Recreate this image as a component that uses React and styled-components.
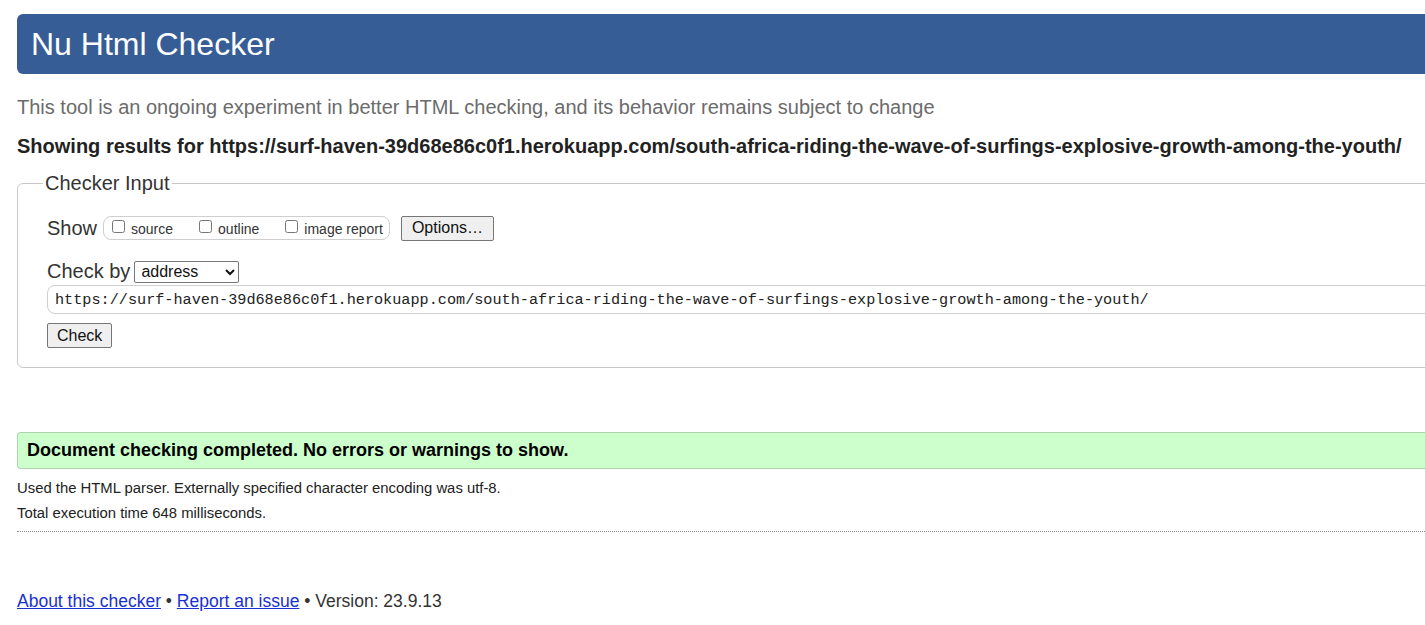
import React from "react";
import styled, { createGlobalStyle } from "styled-components";

const Global = createGlobalStyle`
  html, body { margin: 0; padding: 0; background: #fff; overflow: hidden; }
  body { font-family: "Liberation Sans", Arial, sans-serif; color: #222; }
`;

const Page = styled.div`
  width: 1600px;
  padding: 14px 0 0 17px;
`;

const Header = styled.h1`
  margin: 0;
  height: 60px;
  line-height: 60px;
  background: #365d95;
  color: #fff;
  font-size: 32px;
  font-weight: normal;
  padding-left: 14px;
  border-radius: 6px 0 0 6px;
`;

const Subtitle = styled.p`
  margin: 22px 0 0;
  font-size: 20px;
  line-height: 23px;
  color: #6b6b6b;
`;

const Results = styled.p`
  margin: 16px 0 0;
  font-size: 20px;
  line-height: 23px;
  font-weight: bold;
  color: #222;
`;

const Fieldset = styled.fieldset`
  margin: 14px 0 0;
  padding: 0 0 19px 29px;
  border: 1px solid #c9c9c9;
  border-radius: 6px;
  min-width: 0;
`;

const Legend = styled.legend`
  font-size: 20px;
  line-height: 23px;
  padding: 0 2px;
  margin-left: -4px;
  color: #333;
`;

const Row = styled.div`
  display: flex;
  align-items: center;
  margin-top: ${p => p.$mt || 0}px;
  height: ${p => p.$h}px;
`;

const Label = styled.span`
  font-size: 20px;
  color: #333;
`;

const CheckGroup = styled.div`
  display: flex;
  align-items: center;
  gap: 26px;
  height: 22px;
  margin-left: 6px;
  padding: 0 6px 0 8px;
  border: 1px solid #cfcfcf;
  border-radius: 8px;
`;

const CheckLabel = styled.label`
  display: flex;
  align-items: center;
  font-size: 14px;
  color: #333;
  padding-top: 2px;
`;

const Box = styled.input`
  width: 13px;
  height: 13px;
  margin: 0 6px 5px 0;
`;

const Button = styled.button`
  font-family: "Liberation Sans", Arial, sans-serif;
  font-size: 16px;
  height: 25px;
  padding: 0 ${p => p.$px}px;
  margin-left: ${p => p.$ml || 0}px;
  background: #efefef;
  color: #111;
  border: 1px solid #767676;
  border-radius: 2px;
`;

const Select = styled.select`
  font-family: "Liberation Sans", Arial, sans-serif;
  font-size: 16px;
  width: 105px;
  height: 22px;
  margin-left: 4px;
  padding: 0 0 0 2px;
  border: 1px solid #767676;
  border-radius: 2px;
  background: #fff;
  color: #111;
`;

const UrlInput = styled.input`
  display: block;
  box-sizing: border-box;
  margin-top: 2px;
  width: 1560px;
  height: 29px;
  padding: 0 0 0 7px;
  border: 1px solid #cfcfcf;
  border-radius: 8px;
  font-family: "Liberation Mono", Consolas, monospace;
  font-size: 15.2px;
  color: #222;
  outline: none;
`;

const CheckRow = styled.div`
  margin-top: 9px;
`;

const Success = styled.div`
  margin-top: 64px;
  height: 35px;
  line-height: 35px;
  background: #ccffcc;
  border: 1px solid #aed6ae;
  border-right: none;
  border-radius: 4px 0 0 4px;
  padding-left: 9px;
  font-size: 18px;
  font-weight: bold;
  color: #000;
`;

const Details = styled.div`
  margin-top: 11px;
  padding-bottom: 10px;
  border-bottom: 1px dotted #8a8a8a;
`;

const Info = styled.p`
  margin: ${p => p.$mt || 0}px 0 0;
  font-size: 14.85px;
  line-height: 16px;
  color: #222;
`;

const Footer = styled.p`
  margin: 59px 0 0;
  font-size: 17.5px;
  line-height: 21px;
  color: #333;
`;

const Link = styled.a`
  color: #1a30d0;
  text-decoration: underline;
`;

export default function App() {
  const url =
    "https://surf-haven-39d68e86c0f1.herokuapp.com/south-africa-riding-the-wave-of-surfings-explosive-growth-among-the-youth/";
  return (
    <>
      <Global />
      <Page>
        <Header>Nu Html Checker</Header>
        <Subtitle>
          This tool is an ongoing experiment in better HTML checking, and its behavior remains subject to change
        </Subtitle>
        <Results>Showing results for {url}</Results>
        <Fieldset>
          <Legend>Checker Input</Legend>
          <Row $mt={20} $h={26}>
            <Label>Show</Label>
            <CheckGroup>
              <CheckLabel><Box type="checkbox" />source</CheckLabel>
              <CheckLabel><Box type="checkbox" />outline</CheckLabel>
              <CheckLabel><Box type="checkbox" />image report</CheckLabel>
            </CheckGroup>
            <Button $px={10} $ml={11}>Options…</Button>
          </Row>
          <Row $mt={19} $h={23}>
            <Label>Check by</Label>
            <Select defaultValue="address">
              <option value="address">address</option>
              <option value="file">file upload</option>
              <option value="text">text input</option>
            </Select>
          </Row>
          <UrlInput defaultValue={url} readOnly />
          <CheckRow>
            <Button $px={9}>Check</Button>
          </CheckRow>
        </Fieldset>
        <Success>Document checking completed. No errors or warnings to show.</Success>
        <Details>
          <Info>Used the HTML parser. Externally specified character encoding was utf-8.</Info>
          <Info $mt={9}>Total execution time 648 milliseconds.</Info>
        </Details>
        <Footer>
          <Link href="#">About this checker</Link> • <Link href="#">Report an issue</Link> • Version: 23.9.13
        </Footer>
      </Page>
    </>
  );
}
